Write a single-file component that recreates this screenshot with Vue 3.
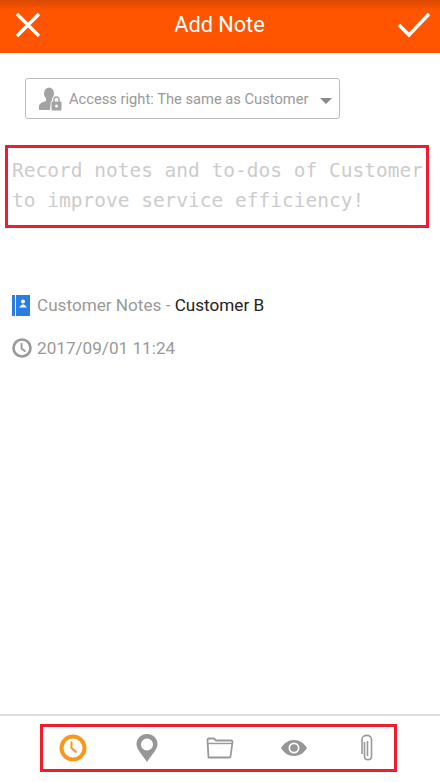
<template>
  <div class="page">
    <header class="topbar">
      <svg class="bar-icon" viewBox="0 0 28 28" width="28" height="28">
        <path d="M3 3L25 25M25 3L3 25" fill="none" stroke="#fff" stroke-width="3.4" />
      </svg>
      <h1>Add Note</h1>
      <svg class="bar-icon" viewBox="0 0 34 26" width="34" height="26">
        <path d="M2 13L12 23L32 2" fill="none" stroke="#fff" stroke-width="3.4" />
      </svg>
    </header>

    <main class="content">
      <div class="access">
        <svg viewBox="0 0 24 24" width="24" height="24" class="access-icon">
          <ellipse cx="11" cy="6.500" rx="5" ry="6" fill="#a3a3a3" />
          <path d="M8 11h6v3h-1l-1 9H1v-4c0-2.500 3-3.500 7-5z" fill="#a3a3a3" />
          <rect x="13.500" y="14.500" width="10" height="9" rx="1" fill="#a3a3a3" />
          <path d="M16 15v-2.500a2.500 2.500 0 0 1 5 0V15" fill="none" stroke="#a3a3a3" stroke-width="1.500" />
          <circle cx="18.500" cy="19" r="1.500" fill="#fff" />
        </svg>
        <span class="access-text">Access right: The same as Customer</span>
        <span class="caret"></span>
      </div>

      <div class="note-box">
        <p>Record notes and to-dos of Customer to improve service efficiency!</p>
      </div>

      <div class="info-row customer-row">
        <svg viewBox="0 0 18 21" width="18" height="21">
          <rect x="0" y="0" width="3" height="21" fill="#2a7de1" />
          <rect x="4" y="0" width="14" height="21" fill="#2a7de1" />
          <circle cx="11" cy="6.500" r="2" fill="#fff" />
          <path d="M7 12.500l3-3h2l3 3z" fill="#fff" />
        </svg>
        <span class="muted">Customer Notes - </span><span class="dark">Customer B</span>
      </div>

      <div class="info-row time-row">
        <svg viewBox="0 0 20 20" width="20" height="20">
          <circle cx="10" cy="10" r="8.500" fill="none" stroke="#999" stroke-width="2.600" />
          <path d="M9.500 5v5.500l4 3" fill="none" stroke="#999" stroke-width="1.800" />
        </svg>
        <span class="muted">2017/09/01 11:24</span>
      </div>
    </main>

    <footer class="toolbar">
      <div class="tools">
        <span class="tool">
          <svg viewBox="0 0 28 28" width="28" height="28">
            <circle cx="14" cy="14" r="11.500" fill="none" stroke="#f7981d" stroke-width="4" />
            <path d="M12.500 7.500v6.500l5 4.500" fill="none" stroke="#f7981d" stroke-width="2" />
          </svg>
        </span>
        <span class="tool">
          <svg viewBox="0 0 22 28" width="22" height="28">
            <path fill-rule="evenodd" d="M11 0C5 0 .5 4.500.5 10c0 5.500 5 9.500 10.500 18C16.500 19.500 21.500 15.500 21.500 10 21.500 4.500 17 0 11 0zm0 4.500a6 6 0 1 1 0 12 6 6 0 0 1 0-12z" fill="#969696" />
          </svg>
        </span>
        <span class="tool">
          <svg viewBox="0 0 28 22" width="28" height="22">
            <path d="M2.500 20.500L1.500 3c0-1 .5-1.500 1.500-1.500h5l2 2h15c1 0 1.500.5 1.500 1.500L24.500 19.500c0 .7-.5 1-1.500 1z" fill="none" stroke="#999" stroke-width="1.800" stroke-linejoin="round" />
            <path d="M2 6.500h24" fill="none" stroke="#999" stroke-width="1.400" />
          </svg>
        </span>
        <span class="tool">
          <svg viewBox="0 0 26 16" width="26" height="16">
            <path fill-rule="evenodd" d="M0 8C3 3 7.500 0 13 0s10 3 13 8c-3 5-7.500 8-13 8S3 13 0 8zm13-5.500a5.500 5.500 0 1 0 0 11 5.500 5.500 0 0 0 0-11z" fill="#969696" />
            <circle cx="13" cy="8" r="3.800" fill="#969696" />
          </svg>
        </span>
        <span class="tool">
          <svg viewBox="0 0 16 28" width="16" height="28">
            <path d="M5.500 8v14c0 5 7 5 7 0V5.500c0-5.500-9.500-5.500-9.500 0V20" fill="none" stroke="#999" stroke-width="1.600" />
            <path d="M8.500 7v15" fill="none" stroke="#999" stroke-width="1.600" />
          </svg>
        </span>
      </div>
    </footer>
  </div>
</template>

<script setup>
</script>

<style>
html,
body {
  margin: 0;
  background: #fff;
}
</style>

<style scoped>
.page {
  width: 440px;
  height: 782px;
  display: flex;
  flex-direction: column;
  font-family: Roboto, "Liberation Sans", sans-serif;
  background: #fff;
  overflow: hidden;
}

.topbar {
  height: 53px;
  flex: none;
  box-sizing: border-box;
  display: flex;
  align-items: center;
  justify-content: space-between;
  padding: 0 9px 4px 14px;
  background: linear-gradient(#d84a00 0, #ff5500 10px);
}

.topbar h1 {
  margin: 0;
  font-size: 21.700px;
  font-weight: 400;
  color: #fff;
}

.content {
  flex: 1;
  padding-top: 25px;
}

.access {
  width: 315px;
  height: 41px;
  box-sizing: border-box;
  margin-left: 25px;
  padding: 0 7px 0 12px;
  display: flex;
  align-items: center;
  border: 1px solid #bbb;
  border-radius: 3px;
}

.access-icon {
  flex: none;
}

.access-text {
  margin-left: 7px;
  font-size: 14.700px;
  color: #999;
  white-space: nowrap;
}

.caret {
  margin: 4px 0 0 auto;
  border-top: 6px solid #888;
  border-left: 6px solid transparent;
  border-right: 6px solid transparent;
}

.note-box {
  width: 424px;
  height: 83px;
  box-sizing: border-box;
  margin: 26px 0 0 5px;
  padding: 8px 0 0 4px;
  border: 3px solid #ee1c2e;
}

.note-box p {
  margin: 0;
  font-family: "DejaVu Sans Mono", monospace;
  font-size: 19.500px;
  line-height: 30px;
  color: #ccc;
}

.info-row {
  display: flex;
  align-items: center;
  font-size: 17.150px;
  white-space: pre;
}

.customer-row {
  margin: 66px 0 0 12px;
  height: 22px;
}

.time-row {
  margin: 21px 0 0 12px;
  height: 22px;
}

.customer-row svg {
  margin-right: 7px;
  flex: none;
}

.time-row svg {
  margin-right: 5px;
  flex: none;
}

.muted {
  color: #999;
}

.dark {
  color: #222;
}

.toolbar {
  height: 68px;
  flex: none;
  box-sizing: border-box;
  border-top: 2px solid #ddd;
  padding: 8px 0 0 40px;
}

.tools {
  width: 357px;
  height: 48px;
  box-sizing: border-box;
  padding-left: 16px;
  display: flex;
  align-items: center;
  gap: 45.500px;
  border: 3px solid #ee1c2e;
}

.tool {
  width: 28px;
  display: flex;
  justify-content: center;
}
</style>
